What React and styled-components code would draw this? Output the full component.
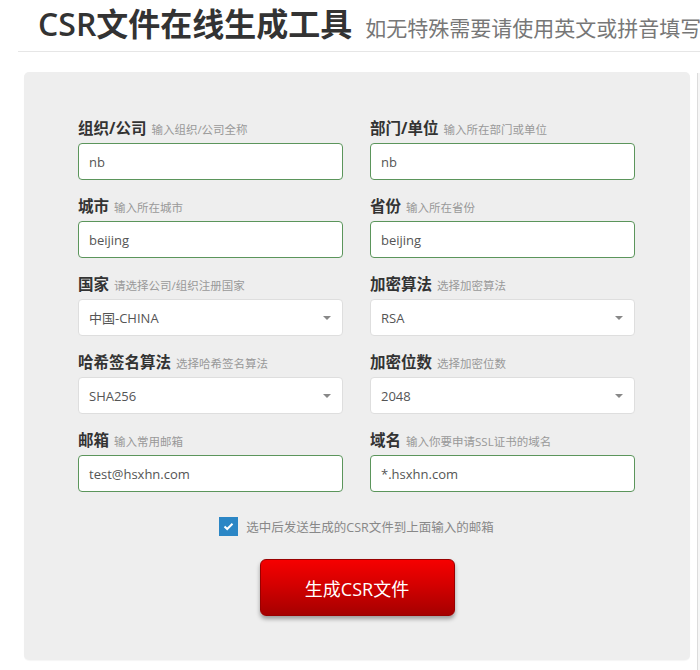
import React from 'react';
import styled, { createGlobalStyle } from 'styled-components';

const GlobalStyle = createGlobalStyle`
  body {
    margin: 0;
    background: #fff;
    font-family: "Open Sans", "Noto Sans CJK SC", sans-serif;
    overflow: hidden;
  }
`;

const Page = styled.div`
  width: 700px;
  height: 670px;
  overflow: hidden;
  position: relative;
`;

const Header = styled.div`
  margin-left: 18px;
  padding: 3px 0 6px 20px;
  border-bottom: 1px solid #e6e6e6;
  white-space: nowrap;
  display: flex;
  align-items: baseline;
  gap: 13px;
`;

const Title = styled.h1`
  margin: 0;
  font-size: 32px;
  font-weight: 600;
  color: #333;
  line-height: 42px;
`;

const Subtitle = styled.span`
  font-size: 21px;
  color: #777;
`;

const Panel = styled.div`
  margin: 20px 0 0 24px;
  width: 666px;
  background: #eeeeee;
  border-radius: 5px;
  padding: 44px 55px 44px 54px;
  box-sizing: border-box;
  box-shadow: 0 1px 1px rgba(0, 0, 0, 0.04);
`;

const SideEdge = styled.div`
  position: absolute;
  left: 697px;
  top: 73px;
  width: 3px;
  height: 600px;
  border-left: 1px solid #dcdcdc;
  background: #f6f6f6;
`;

const Grid = styled.div`
  display: grid;
  grid-template-columns: 265px 265px;
  column-gap: 27px;
  row-gap: 14px;
`;

const Field = styled.div`
  display: flex;
  flex-direction: column;
`;

const Label = styled.div`
  display: flex;
  align-items: baseline;
  gap: 5px;
  height: 22px;
  margin-bottom: 5px;
  white-space: nowrap;
`;

const LabelText = styled.span`
  font-size: 15.5px;
  font-weight: 700;
  color: #333;
`;

const Hint = styled.span`
  font-size: 11.5px;
  color: #999;
`;

const Box = styled.div`
  height: 37px;
  box-sizing: border-box;
  background: #fff;
  border: 1px solid ${p => (p.$select ? '#dedede' : '#5b955b')};
  border-radius: 4px;
  padding: 0 10px;
  display: flex;
  align-items: center;
  justify-content: space-between;
  font-size: 13px;
  color: #555;
`;

const Caret = styled.span`
  width: 0;
  height: 0;
  border-left: 4px solid transparent;
  border-right: 4px solid transparent;
  border-top: 4px solid #888;
  margin-right: 1px;
`;

const CheckRow = styled.label`
  display: flex;
  align-items: center;
  justify-content: center;
  gap: 8px;
  margin-top: 25px;
  font-size: 12.5px;
  color: #888;
`;

const CheckBox = styled.span`
  width: 19px;
  height: 19px;
  background: #2b86c5;
  display: flex;
  align-items: center;
  justify-content: center;
`;

const ButtonRow = styled.div`
  display: flex;
  justify-content: center;
  margin-top: 23px;
  padding-left: 1px;
`;

const Button = styled.button`
  width: 195px;
  height: 57px;
  border: 1px solid #900;
  border-radius: 6px;
  background: linear-gradient(to bottom, #f60000 0%, #d40000 45%, #a50000 100%);
  box-shadow: 0 3px 4px rgba(0, 0, 0, 0.35);
  color: #fff;
  font-family: "Open Sans", "Noto Sans CJK SC", sans-serif;
  font-size: 18px;
  cursor: pointer;
`;

const fields = [
  { label: '组织/公司', hint: '输入组织/公司全称', value: 'nb' },
  { label: '部门/单位', hint: '输入所在部门或单位', value: 'nb' },
  { label: '城市', hint: '输入所在城市', value: 'beijing' },
  { label: '省份', hint: '输入所在省份', value: 'beijing' },
  { label: '国家', hint: '请选择公司/组织注册国家', value: '中国-CHINA', select: true },
  { label: '加密算法', hint: '选择加密算法', value: 'RSA', select: true },
  { label: '哈希签名算法', hint: '选择哈希签名算法', value: 'SHA256', select: true },
  { label: '加密位数', hint: '选择加密位数', value: '2048', select: true },
  { label: '邮箱', hint: '输入常用邮箱', value: 'test@hsxhn.com' },
  { label: '域名', hint: '输入你要申请SSL证书的域名', value: '*.hsxhn.com' },
];

export default function App() {
  return (
    <Page>
      <GlobalStyle />
      <Header>
        <Title>CSR文件在线生成工具</Title>
        <Subtitle>如无特殊需要请使用英文或拼音填写</Subtitle>
      </Header>
      <Panel>
        <Grid>
          {fields.map(f => (
            <Field key={f.label}>
              <Label>
                <LabelText>{f.label}</LabelText>
                <Hint>{f.hint}</Hint>
              </Label>
              <Box $select={f.select}>
                <span>{f.value}</span>
                {f.select && <Caret />}
              </Box>
            </Field>
          ))}
        </Grid>
        <CheckRow>
          <CheckBox>
            <svg width="11" height="9" viewBox="0 0 11 9">
              <path d="M1.5 4.5 L4.2 7 L9.5 1.8" fill="none" stroke="#fff" strokeWidth="2" />
            </svg>
          </CheckBox>
          选中后发送生成的CSR文件到上面输入的邮箱
        </CheckRow>
        <ButtonRow>
          <Button>生成CSR文件</Button>
        </ButtonRow>
      </Panel>
      <SideEdge />
    </Page>
  );
}
